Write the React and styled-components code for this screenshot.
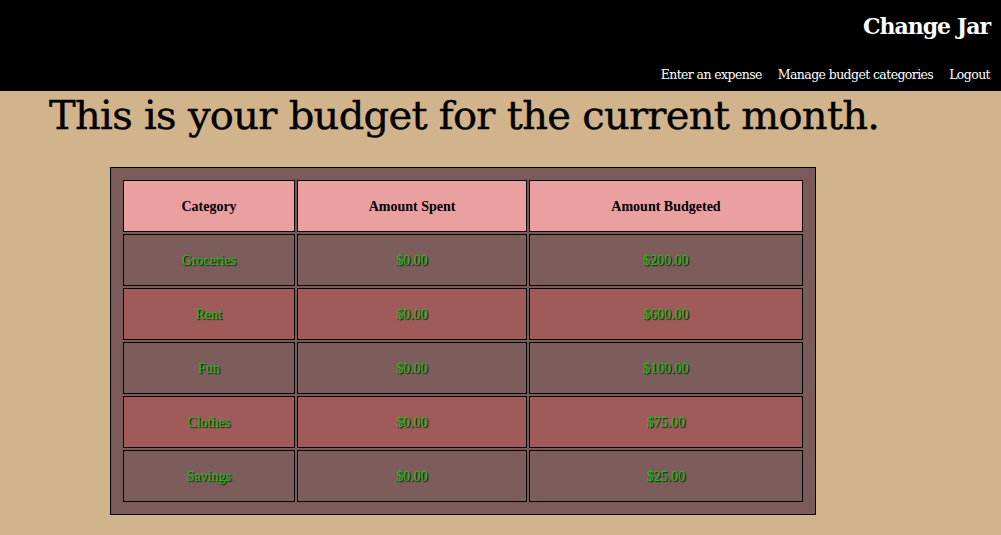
import React from "react";
import styled, { createGlobalStyle } from "styled-components";

const Global = createGlobalStyle`
  html, body { margin: 0; padding: 0; }
  body { background: #d2b48c; font-family: "DejaVu Serif", serif; }
`;

const Header = styled.header`
  background: #000;
  height: 91px;
  padding: 0 11px 0 0;
  box-sizing: border-box;
  display: flex;
  flex-direction: column;
  align-items: flex-end;
`;

const Brand = styled.div`
  color: #fff;
  font-family: "DejaVu Serif", serif;
  font-weight: bold;
  font-size: 22px;
  margin-top: 13px;
  letter-spacing: -1px;
`;

const Nav = styled.nav`
  display: flex;
  gap: 16px;
  margin-top: 28px;
`;

const NavLink = styled.a`
  color: #fff;
  font-size: 12.5px;
  letter-spacing: -0.6px;
  text-decoration: none;
`;

const Title = styled.h1`
  margin: 1px 0 0 49px;
  font-family: "DejaVu Serif", serif;
  font-weight: normal;
  font-size: 40px;
  letter-spacing: -0.7px;
  color: #000;
  -webkit-text-stroke: 0.4px #000;
`;

const Table = styled.table`
  margin: 29px 0 0 110px;
  background: #7b5a5a;
  border: 1px solid #000;
  border-spacing: 2px;
  padding: 10px;
  font-family: "Liberation Serif", serif;
  font-size: 14px;
`;

const Th = styled.th`
  background: #ea9fa0;
  border: 1px solid #000;
  height: 48px;
  padding: 2px 0 0;
  color: #000;
  font-weight: bold;
  width: ${(p) => p.$w}px;
`;

const Td = styled.td`
  background: ${(p) => (p.$alt ? "#a05a5a" : "#7d5c5c")};
  border: 1px solid #000;
  height: 48px;
  padding: 2px 0 0;
  text-align: center;
  color: #2cb024;
  font-weight: normal;
  text-shadow: 1px 1px 1px #000;
  -webkit-text-stroke: 0.3px #2cb024;
`;

const rows = [
  ["Groceries", "$0.00", "$200.00"],
  ["Rent", "$0.00", "$600.00"],
  ["Fun", "$0.00", "$100.00"],
  ["Clothes", "$0.00", "$75.00"],
  ["Savings", "$0.00", "$25.00"],
];

export default function App() {
  return (
    <>
      <Global />
      <Header>
        <Brand>Change Jar</Brand>
        <Nav>
          <NavLink href="#">Enter an expense</NavLink>
          <NavLink href="#">Manage budget categories</NavLink>
          <NavLink href="#">Logout</NavLink>
        </Nav>
      </Header>
      <Title>This is your budget for the current month.</Title>
      <Table>
        <thead>
          <tr>
            <Th $w={170}>Category</Th>
            <Th $w={228}>Amount Spent</Th>
            <Th $w={272}>Amount Budgeted</Th>
          </tr>
        </thead>
        <tbody>
          {rows.map((r, i) => (
            <tr key={r[0]}>
              {r.map((c, j) => (
                <Td key={j} $alt={i % 2 === 1}>{c}</Td>
              ))}
            </tr>
          ))}
        </tbody>
      </Table>
    </>
  );
}
